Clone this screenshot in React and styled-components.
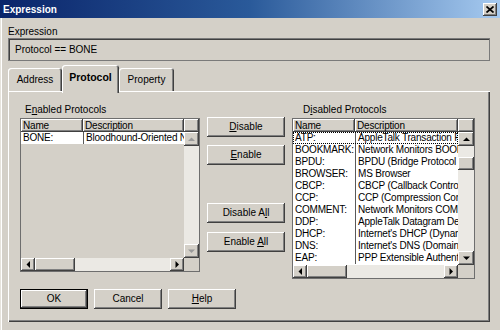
import React from 'react';
import styled, { createGlobalStyle } from 'styled-components';

const GlobalStyle = createGlobalStyle`
  body {
    margin: 0;
    font-family: 'Liberation Sans', Arial, sans-serif;
    font-size: 10px;
    color: #000;
  }
`;

const raised = `
  box-shadow: inset -1px -1px 0 #404040, inset 1px 1px 0 #fff, inset -2px -2px 0 #808080;
`;

const Window = styled.div`
  width: 500px;
  height: 330px;
  overflow: hidden;
  background: #d4d0c8;
  display: flex;
  flex-direction: column;
  box-shadow: inset 1px 0 0 #e6e3dc, inset 2px 0 0 #fff;
`;

const TitleBar = styled.div`
  height: 18px;
  flex: none;
  display: flex;
  align-items: center;
  justify-content: space-between;
  padding: 0 3px;
  background: linear-gradient(to right, #0a246a, #2a5a9a 50%, #a6caf0);
`;

const TitleText = styled.span`
  color: #fff;
  font-weight: bold;
  font-size: 10px;
`;

const CloseButton = styled.div`
  width: 14px;
  height: 13px;
  margin-top: 1px;
  background: #d4d0c8;
  display: grid;
  place-items: center;
  ${raised}
`;

const Body = styled.div`
  padding: 8px 10px 0 8px;
  display: flex;
  flex-direction: column;
`;

const FieldLabel = styled.div`
  line-height: 12px;
`;

const TextField = styled.div`
  height: 23px;
  box-sizing: border-box;
  border: 1px solid #7a7a7a;
  box-shadow: inset 1px 1px 0 #404040;
  padding-left: 6px;
  line-height: 21px;
`;

const TabStrip = styled.div`
  margin-top: 4px;
  height: 26px;
  display: flex;
  align-items: flex-end;
`;

const Tab = styled.div`
  position: relative;
  z-index: ${(p) => (p.$active ? 2 : 1)};
  width: ${(p) => p.$w}px;
  height: ${(p) => (p.$active ? 28 : 23)}px;
  margin-bottom: ${(p) => (p.$active ? -2 : 0)}px;
  box-sizing: border-box;
  padding-bottom: ${(p) => (p.$active ? 4 : 1)}px;
  background: #d4d0c8;
  border-radius: 3px 3px 0 0;
  box-shadow: inset 1px 1px 0 #fff, inset -1px 0 0 #404040, inset -2px 0 0 #808080;
  display: flex;
  align-items: center;
  justify-content: center;
  font-weight: ${(p) => (p.$active ? 'bold' : 'normal')};
  font-size: ${(p) => (p.$active ? 10.5 : 10)}px;
`;

const Panel = styled.div`
  height: 231px;
  box-sizing: border-box;
  padding: 13px 0 0 12px;
  box-shadow: inset 1px 1px 0 #fff, inset -1px -1px 0 #404040, inset -2px -2px 0 #808080;
  display: flex;
  flex-direction: column;
`;

const Columns = styled.div`
  display: grid;
  grid-template-columns: 180px 78px 183px;
  grid-template-rows: 14px auto;
  column-gap: 7px;
  align-items: start;
`;

const GroupLabel = styled.div`
  line-height: 12px;
  padding-left: ${(p) => p.$indent}px;
`;

const ListBox = styled.div`
  height: ${(p) => p.$h}px;
  box-sizing: border-box;
  border: 1px solid #6e6e6e;
  box-shadow: inset 1px 1px 0 #404040;
  display: flex;
  flex-direction: column;
  overflow: hidden;
  letter-spacing: -0.2px;
`;

const ListHeader = styled.div`
  display: grid;
  grid-template-columns: ${(p) => p.$name}px 1fr ${(p) => p.$sb}px;
  height: 13px;
  flex: none;
`;

const HeaderCell = styled.div`
  background: #d4d0c8;
  ${raised}
  line-height: 13px;
  padding-left: 2px;
  white-space: nowrap;
  overflow: hidden;
`;

const ListBody = styled.div`
  flex: 1;
  display: grid;
  grid-template-columns: 1fr ${(p) => p.$sb}px;
  grid-template-rows: 1fr 13px;
  min-height: 0;
`;

const RowsArea = styled.div`
  background: ${(p) => (p.$fill ? '#fff' : '#d4d0c8')};
  overflow: hidden;
`;

const Row = styled.div`
  display: grid;
  grid-template-columns: ${(p) => p.$name}px 1fr;
  height: 12px;
  line-height: 12px;
  background: #fff;
  outline: ${(p) => (p.$focus ? '1px dotted #000' : 'none')};
  outline-offset: -1px;
`;

const NameCell = styled.div`
  padding-left: 2px;
  white-space: nowrap;
  overflow: hidden;
`;

const DescCell = styled.div`
  border-left: 1px solid #5a5a5a;
  padding-left: 2px;
  white-space: nowrap;
  overflow: hidden;
`;

const VScroll = styled.div`
  display: flex;
  flex-direction: column;
  background: #ebe9e4;
`;

const HScroll = styled.div`
  display: flex;
  background: #ebe9e4;
`;

const ScrollBtn = styled.div`
  flex: none;
  width: ${(p) => p.$w || 'auto'};
  height: ${(p) => p.$h || 'auto'};
  background: #d4d0c8;
  ${raised}
  display: grid;
  place-items: center;
`;

const Track = styled.div`
  flex: 1;
`;

const Thumb = styled.div`
  flex: none;
  width: ${(p) => p.$w || 'auto'};
  height: ${(p) => p.$h || 'auto'};
  margin-top: ${(p) => p.$mt || 0}px;
  background: #d4d0c8;
  ${raised}
`;

const Corner = styled.div`
  background: #d4d0c8;
`;

const ButtonColumn = styled.div`
  display: flex;
  flex-direction: column;
  margin-top: -1px;
`;

const Button = styled.div`
  width: ${(p) => p.$w}px;
  height: 20px;
  margin-top: ${(p) => p.$mt || 0}px;
  box-sizing: border-box;
  background: #d4d0c8;
  border: ${(p) => (p.$default ? '1px solid #000' : 'none')};
  ${raised}
  text-align: center;
  line-height: ${(p) => (p.$default ? 18 : 20)}px;
  font-size: 10px;
  white-space: pre;
`;

const ButtonRow = styled.div`
  margin-top: 10px;
  display: flex;
  gap: 6px;
`;

const Arrow = ({ dir, off }) => {
  const pts = {
    up: '0,4 3.5,0.5 7,4',
    down: '0,0.5 3.5,4 7,0.5',
    left: '4,0 0.5,3.5 4,7',
    right: '0.5,0 4,3.5 0.5,7',
  }[dir];
  const vertical = dir === 'up' || dir === 'down';
  return (
    <svg width={vertical ? 7 : 5} height={vertical ? 5 : 7} viewBox={vertical ? '0 0 7 5' : '0 0 5 7'}>
      <polygon points={pts} fill={off ? '#9a9a9a' : '#000'} />
    </svg>
  );
};

const enabled = [{ name: 'BONE:', desc: 'Bloodhound-Oriented Network Entity' }];

const disabled = [
  { name: 'ATP:', desc: 'AppleTalk Transaction Protocol' },
  { name: 'BOOKMARK:', desc: 'Network Monitors BOOKMARK' },
  { name: 'BPDU:', desc: 'BPDU (Bridge Protocol Data Unit)' },
  { name: 'BROWSER:', desc: 'MS Browser' },
  { name: 'CBCP:', desc: 'CBCP (Callback Control Protocol)' },
  { name: 'CCP:', desc: 'CCP (Compression Control Protocol)' },
  { name: 'COMMENT:', desc: 'Network Monitors COMMENT' },
  { name: 'DDP:', desc: 'AppleTalk Datagram Delivery Protocol' },
  { name: 'DHCP:', desc: "Internet's DHCP (Dynamic Host Configuration)" },
  { name: 'DNS:', desc: "Internet's DNS (Domain Name System)" },
  { name: 'EAP:', desc: 'PPP Extensible Authentication Protocol' },
];

const ProtocolList = ({ rows, height, sb, fill, thumbAt, vOff }) => (
  <ListBox $h={height}>
    <ListHeader $name={62} $sb={sb}>
      <HeaderCell>Name</HeaderCell>
      <HeaderCell>Description</HeaderCell>
      <HeaderCell />
    </ListHeader>
    <ListBody $sb={sb}>
      <RowsArea $fill={fill}>
        {rows.map((r, i) => (
          <Row key={r.name} $name={62} $focus={fill && i === 0}>
            <NameCell>{r.name}</NameCell>
            <DescCell>{r.desc}</DescCell>
          </Row>
        ))}
      </RowsArea>
      <VScroll>
        <ScrollBtn $h="14px">
          <Arrow dir="up" off={vOff} />
        </ScrollBtn>
        {thumbAt != null && <Thumb $h="13px" $mt={thumbAt} />}
        <Track />
        <ScrollBtn $h="14px">
          <Arrow dir="down" off={vOff} />
        </ScrollBtn>
      </VScroll>
      <HScroll>
        <ScrollBtn $w="14px">
          <Arrow dir="left" />
        </ScrollBtn>
        <Thumb $w="40px" />
        <Track />
        <ScrollBtn $w="14px">
          <Arrow dir="right" />
        </ScrollBtn>
      </HScroll>
      <Corner />
    </ListBody>
  </ListBox>
);

export default function App() {
  return (
    <>
      <GlobalStyle />
      <Window>
        <TitleBar>
          <TitleText>Expression</TitleText>
          <CloseButton>
            <svg width="8" height="7" viewBox="0 0 8 7">
              <path d="M0.5 0.5 L7.5 6.5 M7.5 0.5 L0.5 6.5" stroke="#000" strokeWidth="1.7" />
            </svg>
          </CloseButton>
        </TitleBar>
        <Body>
          <FieldLabel>Expression</FieldLabel>
          <TextField>Protocol == BONE</TextField>
          <TabStrip>
            <Tab $w={54}>Address</Tab>
            <Tab $w={57} $active>
              Protocol
            </Tab>
            <Tab $w={55}>Property</Tab>
          </TabStrip>
          <Panel>
            <Columns>
              <GroupLabel $indent={5}>
                E<u>n</u>abled Protocols
              </GroupLabel>
              <div />
              <GroupLabel $indent={11}>
                D<u>i</u>sabled Protocols
              </GroupLabel>
              <ProtocolList rows={enabled} height={154} sb={15} vOff />
              <ButtonColumn>
                <Button $w={78}>
                  <u>D</u>isable
                </Button>
                <Button $w={78} $mt={8}>
                  <u>E</u>nable
                </Button>
                <Button $w={78} $mt={38}>
                  Disable A<u>l</u>l
                </Button>
                <Button $w={78} $mt={9}>
                  {'Enable '}
                  <u>A</u>ll
                </Button>
              </ButtonColumn>
              <ProtocolList rows={disabled} height={161} sb={16} fill thumbAt={11} />
            </Columns>
            <ButtonRow>
              <Button $w={68} $default>
                OK
              </Button>
              <Button $w={68}>Cancel</Button>
              <Button $w={68}>
                <u>H</u>elp
              </Button>
            </ButtonRow>
          </Panel>
        </Body>
      </Window>
    </>
  );
}
